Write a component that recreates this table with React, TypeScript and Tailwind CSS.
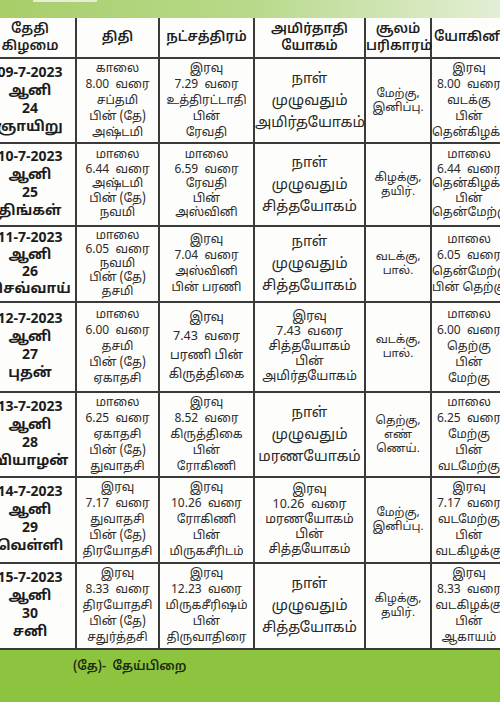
import React from "react";

type Cell = { lines: string[]; cls?: string };

const header: Cell[] = [
  { lines: ["தேதி", "கிழமை"] },
  { lines: ["திதி"] },
  { lines: ["நட்சத்திரம்"] },
  { lines: ["அமிர்தாதி", "யோகம்"] },
  { lines: ["சூலம்", "பரிகாரம்"] },
  { lines: ["யோகினி"] },
];

const dateCls = "text-[14px] leading-[18px] font-bold text-[#1c1c1c]";
const smallCls = "text-[12px] leading-[16px] text-[#2a2a2a]";
const tightCls = "text-[12px] leading-[14.5px] text-[#2a2a2a]";
const bigCls = "text-[14.5px] leading-[22px] text-[#2a2a2a]";
const medCls = "text-[12.5px] leading-[15px] text-[#2a2a2a]";
const sulCls = "text-[11.5px] leading-[14px] text-[#2a2a2a]";

const rows: { h: string; cells: Cell[] }[] = [
  {
    h: "h-[85px]",
    cells: [
      { lines: ["09-7-2023", "ஆனி", "24", "ஞாயிறு"], cls: dateCls },
      { lines: ["காலை", "8.00  வரை", "சப்தமி", "பின் (தே)", "அஷ்டமி"], cls: smallCls },
      { lines: ["இரவு", "7.29  வரை", "உத்திரட்டாதி", "பின்", "ரேவதி"], cls: smallCls },
      { lines: ["நாள்", "முழுவதும்", "அமிர்தயோகம்"], cls: bigCls },
      { lines: ["மேற்கு,", "இனிப்பு."], cls: sulCls },
      { lines: ["இரவு", "8.00  வரை", "வடக்கு", "பின்", "தென்கிழக்கு"], cls: smallCls },
    ],
  },
  {
    h: "h-[83px]",
    cells: [
      { lines: ["10-7-2023", "ஆனி", "25", "திங்கள்"], cls: dateCls },
      { lines: ["மாலை", "6.44  வரை", "அஷ்டமி", "பின் (தே)", "நவமி"], cls: tightCls },
      { lines: ["மாலை", "6.59  வரை", "ரேவதி", "பின்", "அஸ்வினி"], cls: tightCls },
      { lines: ["நாள்", "முழுவதும்", "சித்தயோகம்"], cls: bigCls },
      { lines: ["கிழக்கு,", "தயிர்."], cls: sulCls },
      { lines: ["மாலை", "6.44  வரை", "தென்கிழக்கு", "பின்", "தென்மேற்கு"], cls: tightCls },
    ],
  },
  {
    h: "h-[76px]",
    cells: [
      { lines: ["11-7-2023", "ஆனி", "26", "செவ்வாய்"], cls: "text-[14px] leading-[17px] font-bold text-[#1c1c1c]" },
      { lines: ["மாலை", "6.05  வரை", "நவமி", "பின் (தே)", "தசமி"], cls: "text-[12px] leading-[14px] text-[#2a2a2a]" },
      { lines: ["இரவு", "7.04  வரை", "அஸ்வினி", "பின் பரணி"], cls: smallCls },
      { lines: ["நாள்", "முழுவதும்", "சித்தயோகம்"], cls: bigCls },
      { lines: ["வடக்கு,", "பால்."], cls: sulCls },
      { lines: ["மாலை", "6.05  வரை", "தென்மேற்கு", "பின் தெற்கு"], cls: smallCls },
    ],
  },
  {
    h: "h-[90px]",
    cells: [
      { lines: ["12-7-2023", "ஆனி", "27", "புதன்"], cls: dateCls },
      { lines: ["மாலை", "6.00  வரை", "தசமி", "பின் (தே)", "ஏகாதசி"], cls: smallCls },
      { lines: ["இரவு", "7.43  வரை", "பரணி பின்", "கிருத்திகை"], cls: "text-[12.5px] leading-[19px] text-[#2a2a2a]" },
      { lines: ["இரவு", "7.43  வரை", "சித்தயோகம்", "பின்", "அமிர்தயோகம்"], cls: medCls },
      { lines: ["வடக்கு,", "பால்."], cls: sulCls },
      { lines: ["மாலை", "6.00  வரை", "தெற்கு", "பின்", "மேற்கு"], cls: smallCls },
    ],
  },
  {
    h: "h-[85px]",
    cells: [
      { lines: ["13-7-2023", "ஆனி", "28", "வியாழன்"], cls: dateCls },
      { lines: ["மாலை", "6.25  வரை", "ஏகாதசி", "பின் (தே)", "துவாதசி"], cls: smallCls },
      { lines: ["இரவு", "8.52  வரை", "கிருத்திகை", "பின்", "ரோகிணி"], cls: smallCls },
      { lines: ["நாள்", "முழுவதும்", "மரணயோகம்"], cls: bigCls },
      { lines: ["தெற்கு,", "எண்", "ணெய்."], cls: sulCls },
      { lines: ["மாலை", "6.25  வரை", "மேற்கு", "பின்", "வடமேற்கு"], cls: smallCls },
    ],
  },
  {
    h: "h-[86px]",
    cells: [
      { lines: ["14-7-2023", "ஆனி", "29", "வெள்ளி"], cls: dateCls },
      { lines: ["இரவு", "7.17  வரை", "துவாதசி", "பின் (தே)", "திரயோதசி"], cls: smallCls },
      { lines: ["இரவு", "10.26  வரை", "ரோகிணி", "பின்", "மிருகசீரிடம்"], cls: smallCls },
      { lines: ["இரவு", "10.26  வரை", "மரணயோகம்", "பின்", "சித்தயோகம்"], cls: medCls },
      { lines: ["மேற்கு,", "இனிப்பு."], cls: sulCls },
      { lines: ["இரவு", "7.17  வரை", "வடமேற்கு", "பின்", "வடகிழக்கு"], cls: smallCls },
    ],
  },
  {
    h: "h-[86px]",
    cells: [
      { lines: ["15-7-2023", "ஆனி", "30", "சனி"], cls: dateCls },
      { lines: ["இரவு", "8.33  வரை", "திரயோதசி", "பின் (தே)", "சதுர்த்தசி"], cls: smallCls },
      { lines: ["இரவு", "12.23  வரை", "மிருகசீரிஷம்", "பின்", "திருவாதிரை"], cls: smallCls },
      { lines: ["நாள்", "முழுவதும்", "சித்தயோகம்"], cls: bigCls },
      { lines: ["கிழக்கு,", "தயிர்."], cls: sulCls },
      { lines: ["இரவு", "8.33  வரை", "வடகிழக்கு", "பின்", "ஆகாயம்"], cls: smallCls },
    ],
  },
];

const colW = ["w-[92px]", "w-[83px]", "w-[95px]", "w-[111px]", "w-[66px]", "w-[76px]"];

const font = {
  fontFamily: '"Noto Sans Tamil", "Lohit Tamil", "Latha", "Noto Sans", "Liberation Sans", sans-serif',
};

export default function App() {
  return (
    <div className="w-[500px] h-[702px] overflow-hidden bg-[#8cc43f]" style={font}>
      <div className="h-[18px] bg-linear-to-r from-[#a7ce69] via-[#b8d98a] to-[#e3eed5]">
        <div className="ml-[33px] w-[64px] h-[2px] bg-[#e4f0d6]" />
      </div>
      <div className="ml-[-17px] w-[523px] bg-[#fdfdfb]">
        <table className="w-[523px] table-fixed border-collapse">
          <colgroup>
            {colW.map((w, i) => (
              <col key={i} className={w} />
            ))}
          </colgroup>
          <thead>
            <tr className="h-[40px]">
              {header.map((c, i) => (
                <th
                  key={i}
                  className="border-2 border-[#3a3a3a] border-t-0 p-0 align-middle text-center font-semibold text-[13.5px] leading-[17px] text-[#1e1e1e] whitespace-nowrap"
                >
                  {c.lines.map((l, j) => (
                    <div key={j}>{l}</div>
                  ))}
                </th>
              ))}
            </tr>
          </thead>
          <tbody>
            {rows.map((r, ri) => (
              <tr key={ri} className={r.h}>
                {r.cells.map((c, ci) => (
                  <td
                    key={ci}
                    className={`border-2 border-[#3a3a3a] p-0 align-middle text-center whitespace-pre ${c.cls ?? ""}`}
                  >
                    {c.lines.map((l, j) => (
                      <div key={j}>{l}</div>
                    ))}
                  </td>
                ))}
              </tr>
            ))}
          </tbody>
        </table>
      </div>
      <div className="h-[53px] bg-[#8cc43f] pl-[73px] pt-[4px]">
        <span className="text-[12.5px] font-semibold text-[#1e2a10]">(தே)-&nbsp;&nbsp;தேய்பிறை</span>
      </div>
    </div>
  );
}
